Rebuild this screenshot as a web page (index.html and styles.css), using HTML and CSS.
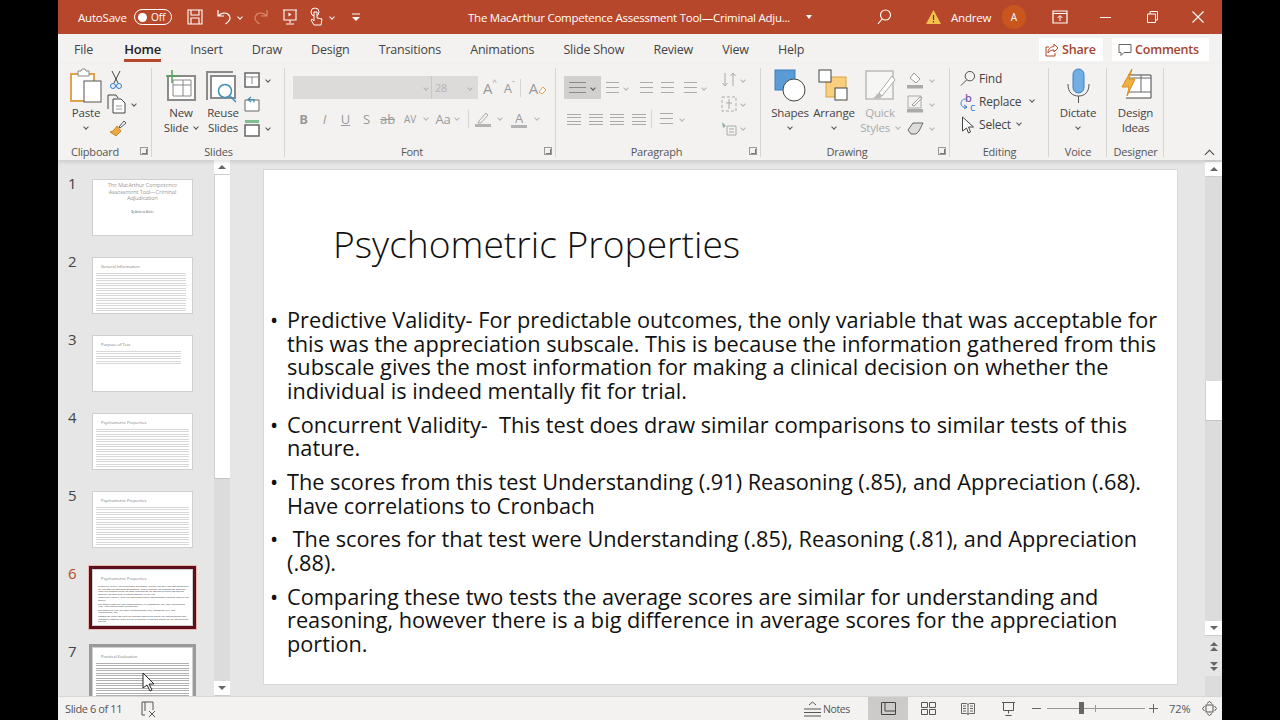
FILE: index.html
```html
<!DOCTYPE html>
<html lang="en">
<head>
  <meta charset="UTF-8" />
  <title>PowerPoint - Psychometric Properties</title>
  <link rel="stylesheet" href="styles.css">
</head>
<body>
<div class="window">

  <!-- title bar -->
  <header class="titlebar">
    <span class="autosave">AutoSave</span>
    <span class="toggle"><i></i>Off</span>
    <svg class="tb save" width="18" height="18" viewBox="0 0 18 18"><path d="M2 2h14v14H2zM5 2v5h8V2M5 16v-6h8v6" fill="none" stroke="#fff" stroke-width="1.1"/></svg>
    <svg class="tb undo" width="18" height="18" viewBox="0 0 18 18"><path d="M3 2v6h6M3.5 8c3-4 9-4 11 0 1.5 3-1 6-4 8" fill="none" stroke="#fff" stroke-width="1.2"/></svg>
    <i class="chev white c-undo"></i>
    <svg class="tb redo" width="18" height="18" viewBox="0 0 18 18"><path d="M15 2v6H9M14.5 8c-3-4-9-4-11 0-1.5 3 1 6 4 8" fill="none" stroke="#d98a70" stroke-width="1.2"/></svg>
    <svg class="tb pres" width="18" height="18" viewBox="0 0 18 18"><path d="M2 2h14M3 2v10h12V2M9 12v3M5 16h8" fill="none" stroke="#fff" stroke-width="1.1"/><path d="M7.5 4.5v4l3-2z" fill="#fff"/></svg>
    <svg class="tb touch" width="16" height="20" viewBox="0 0 16 20"><circle cx="7" cy="5" r="4" fill="none" stroke="#fff"/><path d="M6 5v9l-2-2-1 1 3 5h7l1-6-5-1V5z" fill="#b7472a" stroke="#fff"/></svg>
    <i class="chev white c-touch"></i>
    <svg class="tb more" width="10" height="10" viewBox="0 0 10 10"><path d="M1 2h8" stroke="#fff"/><path d="M1 5h8L5 9z" fill="#fff"/></svg>
    <span class="doc-title">The MacArthur Competence Assessment Tool—Criminal Adju...</span>
    <i class="caret"></i>
    <svg class="tb search" width="16" height="16" viewBox="0 0 16 16"><circle cx="9.5" cy="6" r="5" fill="none" stroke="#fff" stroke-width="1.1"/><path d="M6 10l-4 5" stroke="#fff" stroke-width="1.2"/></svg>
    <svg class="tb warn" width="15" height="14" viewBox="0 0 15 14"><path d="M7.5 0L15 14H0z" fill="#f4c04e"/><path d="M7.5 5v5M7.5 11v1.5" stroke="#5a3a10" stroke-width="1.2"/></svg>
    <span class="user">Andrew</span>
    <span class="avatar">A</span>
    <svg class="tb display" width="16" height="14" viewBox="0 0 16 14"><path d="M1 1h14v12H1zM1 3.5h14" fill="none" stroke="#fff" stroke-width="1.2"/><path d="M8 11V6M5.5 8L8 5.5 10.5 8" fill="none" stroke="#fff"/></svg>
    <svg class="tb min" width="11" height="3" viewBox="0 0 11 3"><path d="M0 1.5h11" stroke="#fff"/></svg>
    <svg class="tb restore" width="11" height="12" viewBox="0 0 11 12"><path d="M.5 3h8v8.5h-8zM3 3V.5h7.5V9H8.5" fill="none" stroke="#fff"/></svg>
    <svg class="tb close" width="12" height="12" viewBox="0 0 12 12"><path d="M.5.5l11 11M11.5.5l-11 11" stroke="#fff" stroke-width="1.1"/></svg>
  </header>

  <!-- tabs -->
  <nav class="tabs">
    <a>File</a>
    <a class="active">Home</a>
    <a>Insert</a>
    <a>Draw</a>
    <a>Design</a>
    <a>Transitions</a>
    <a>Animations</a>
    <a>Slide Show</a>
    <a>Review</a>
    <a>View</a>
    <a>Help</a>
    <div class="tab-actions">
      <button class="share">
        <svg width="14" height="14" viewBox="0 0 14 14"><path d="M9 1l4 4-4 4V7C6 7 4 8 3 10c0-4 2-6 6-6.5zM10 10v3H1V4h3" fill="none" stroke="#b7472a"/></svg>
        Share
      </button>
      <button class="comments">
        <svg width="14" height="14" viewBox="0 0 14 14"><path d="M1 1.5h12v8H6l-3 3v-3H1z" fill="none" stroke="#666"/></svg>
        Comments
      </button>
    </div>
  </nav>

  <!-- ribbon -->
  <section class="ribbon">

    <div class="group g-clipboard">
      <div class="body">
        <div class="big w-paste">
          <svg width="32" height="36" viewBox="0 0 32 36"><rect x="1" y="6" width="23" height="27" fill="#fff" stroke="#e0a24a" stroke-width="2"/><path d="M8 6V3h3l1-2h3l1 2h3v5H8z" fill="#fff" stroke="#888"/><rect x="14" y="13" width="17" height="21" fill="#fff" stroke="#555"/></svg>
          <span>Paste</span>
          <i class="chev"></i>
        </div>
        <div class="col">
          <div class="row">
            <svg class="ml" width="14" height="20" viewBox="0 0 14 20"><path d="M3 1l6 12M11 1L5 13" stroke="#444" fill="none"/><circle cx="4" cy="16" r="2.5" fill="none" stroke="#2b7cd3"/><circle cx="10" cy="16" r="2.5" fill="none" stroke="#2b7cd3"/></svg>
          </div>
          <div class="row">
            <svg width="19" height="20" viewBox="0 0 19 20"><path d="M1 15V1h8l2 3" fill="none" stroke="#444"/><path d="M6 5h8l4 4v10H6z" fill="#fff" stroke="#444"/><path d="M9 12h6M9 15h6" stroke="#999"/></svg>
            <i class="chev"></i>
          </div>
          <div class="row">
            <svg class="ml" width="18" height="18" viewBox="0 0 18 18"><path d="M10 8l5-6 2 2-6 5z" fill="#fff" stroke="#555"/><path d="M8 7l4 5-5 5-6-4 3-1z" fill="#eba843" stroke="#c98a2a"/></svg>
          </div>
        </div>
      </div>
      <div class="label">Clipboard<i class="launcher"></i></div>
    </div>

    <div class="group g-slides">
      <div class="body">
        <div class="big w-new">
          <svg width="32" height="36" viewBox="0 0 32 36"><rect x="3" y="8" width="27" height="24" fill="#fff" stroke="#8a8a8a" stroke-width="2"/><path d="M8 12h18v16H8zM18 12v16M8 17h18" fill="none" stroke="#888"/><path d="M7 2v13M1 8h13" stroke="#5aa05a" stroke-width="1.5"/></svg>
          <span>New</span>
          <span>Slide <i class="chev inline"></i></span>
        </div>
        <div class="big w-reuse">
          <svg width="36" height="36" viewBox="0 0 36 36"><path d="M2 32V4h26" fill="none" stroke="#8a8a8a" stroke-width="2"/><rect x="6" y="8" width="24" height="22" fill="#fff" stroke="#8a8a8a" stroke-width="2"/><circle cx="20" cy="23" r="6.5" fill="#fff" stroke="#3f8fb5" stroke-width="1.5"/><path d="M25 28l6 6" stroke="#3f8fb5" stroke-width="1.5"/></svg>
          <span>Reuse</span>
          <span>Slides</span>
        </div>
        <div class="col">
          <div class="row">
            <svg width="16" height="16" viewBox="0 0 16 16"><rect x="1" y="1" width="14" height="14" fill="#fff" stroke="#666" stroke-width="1.5"/><path d="M1 5h14M8 5v7" stroke="#888"/></svg>
            <i class="chev"></i>
          </div>
          <div class="row">
            <svg width="16" height="16" viewBox="0 0 16 16"><path d="M1 4h14v11H1z" fill="#fff" stroke="#666"/><path d="M7 1L4 3.5 7 6M4 3.5h6v3" fill="none" stroke="#3f8fb5" stroke-width="1.2"/></svg>
          </div>
          <div class="row">
            <svg width="16" height="18" viewBox="0 0 16 18"><rect x="1" y="1" width="14" height="3" fill="#7fbf8f"/><rect x="1" y="6" width="14" height="11" fill="#fff" stroke="#666" stroke-width="1.5"/></svg>
            <i class="chev"></i>
          </div>
        </div>
      </div>
      <div class="label">Slides</div>
    </div>

    <div class="group g-font">
      <div class="body stacked">
        <div class="tool-row r1">
          <div class="combo font-name"><i class="chev faded"></i></div>
          <div class="combo font-size"><span>28</span><i class="chev faded"></i></div>
          <span class="ft grow">A<sup>^</sup></span>
          <span class="ft shrink">A<sup>ˇ</sup></span>
          <i class="vsep"></i>
          <span class="ft clear">A<svg width="9" height="9" viewBox="0 0 9 9"><path d="M1 6l4-5 3 3-4 4z" fill="#fff" stroke="#e0a24a"/></svg></span>
        </div>
        <div class="tool-row r2">
          <b class="f">B</b>
          <i class="f">I</i>
          <u class="f">U</u>
          <span class="f">S</span>
          <s class="f">ab</s>
          <span class="f av">AV</span><i class="chev faded c-av"></i>
          <span class="f aa">Aa</span><i class="chev faded c-aa"></i>
          <i class="vsep"></i>
          <svg class="hl" width="16" height="18" viewBox="0 0 16 18"><path d="M4 11l7-8 2 2-7 8H3z" fill="none" stroke="#aaa"/><rect y="14" width="16" height="3" fill="#b3b3b3"/></svg><i class="chev faded c-hl"></i>
          <span class="col-a"><span>A</span></span><i class="chev faded c-col"></i>
        </div>
      </div>
      <div class="label">Font<i class="launcher"></i></div>
    </div>

    <div class="group g-para">
      <div class="body stacked">
        <div class="tool-row pr1">
          <div class="list-on"><i class="lines-ic"></i><i class="chev"></i></div>
          <i class="lines-ic"></i><i class="chev faded"></i>
          <i class="lines-ic ind1"></i>
          <i class="lines-ic ind2"></i>
          <i class="lines-ic sp"></i><i class="chev faded"></i>
        </div>
        <div class="tool-row pr2">
          <i class="align"></i>
          <i class="align"></i>
          <i class="align"></i>
          <i class="align"></i>
          <i class="vsep"></i>
          <i class="lines-ic"></i><i class="chev faded"></i>
        </div>
        <div class="para-side">
          <div class="row"><svg width="16" height="16" viewBox="0 0 16 16"><path d="M4 1v13M1.5 11L4 14l2.5-3M12 14V1M9.5 4L12 1l2.5 3" fill="none" stroke="#aaa"/></svg><i class="chev faded"></i></div>
          <div class="row"><svg width="16" height="16" viewBox="0 0 16 16"><path d="M1 1h14v14H1z" fill="none" stroke="#aaa" stroke-dasharray="3 2"/><path d="M8 3v10M5 7h6" stroke="#aaa"/></svg><i class="chev faded"></i></div>
          <div class="row"><svg width="16" height="16" viewBox="0 0 16 16"><path d="M6 6h9v9H6z" fill="none" stroke="#aaa"/><path d="M8 9h5M8 12h5" stroke="#aaa"/><path d="M1 2l4 4-3 2z" fill="#8fb0a8"/></svg><i class="chev faded"></i></div>
        </div>
      </div>
      <div class="label">Paragraph<i class="launcher"></i></div>
    </div>

    <div class="group g-drawing">
      <div class="body">
        <div class="big w-shapes">
          <svg width="32" height="36" viewBox="0 0 32 36"><rect x="1" y="2" width="20" height="20" fill="#5b9bd5" stroke="#3f7fc0"/><circle cx="20" cy="22" r="11" fill="#fff" stroke="#444"/></svg>
          <span>Shapes</span>
          <i class="chev"></i>
        </div>
        <div class="big w-arrange">
          <svg width="32" height="36" viewBox="0 0 32 36"><rect x="8" y="9" width="20" height="20" fill="#f7cf7f" stroke="#d9a13f"/><rect x="1" y="2" width="12" height="12" fill="#fff" stroke="#444"/><rect x="17" y="20" width="12" height="12" fill="#fff" stroke="#444"/></svg>
          <span>Arrange</span>
          <i class="chev"></i>
        </div>
        <div class="big w-quick faded-text">
          <svg width="32" height="36" viewBox="0 0 32 36"><rect x="2" y="3" width="27" height="28" fill="#f6f6f5" stroke="#bbb" stroke-width="1.5"/><path d="M28 8L15 25l3 3L31 12z" fill="#fff" stroke="#aaa"/><path d="M15 25c-3 1-3 4-6 5 4 1 8 1 9-2z" fill="#bbb"/></svg>
          <span>Quick</span>
          <span>Styles <i class="chev inline faded"></i></span>
        </div>
        <div class="col">
          <div class="row"><svg width="17" height="18" viewBox="0 0 17 18"><path d="M7 2l6 6-4 4-6-5z" fill="#fff" stroke="#999"/><rect y="14" width="16" height="3.5" fill="#aaa"/></svg><i class="chev faded"></i></div>
          <div class="row"><svg width="17" height="18" viewBox="0 0 17 18"><path d="M1 1h13v12H1z" fill="none" stroke="#aaa"/><path d="M5 10l8-8 2 1-8 8z" fill="#fff" stroke="#999"/><rect y="14" width="16" height="3.5" fill="#aaa"/></svg><i class="chev faded"></i></div>
          <div class="row"><svg width="17" height="14" viewBox="0 0 17 14"><path d="M1 9l5-7h10l-4 8-3 3H4z" fill="#ddd" stroke="#666"/></svg><i class="chev faded"></i></div>
        </div>
      </div>
      <div class="label">Drawing<i class="launcher"></i></div>
    </div>

    <div class="group g-editing">
      <div class="body">
        <div class="col edit-col">
          <div class="row">
            <svg class="ic" width="17" height="17" viewBox="0 0 17 17"><circle cx="10.5" cy="6" r="5" fill="none" stroke="#444"/><path d="M7 10l-6 6" stroke="#444"/></svg>
            <span>Find</span>
          </div>
          <div class="row">
            <span class="replace-ic"><b>b</b><em>c</em><svg width="8" height="11" viewBox="0 0 8 11"><path d="M7 1.5C3 0 1 3 1 5.5S3 10 7 9M4 7l3 2-3 2" fill="none" stroke="#2b7cd3"/></svg></span>
            <span>Replace</span><i class="chev far"></i>
          </div>
          <div class="row">
            <svg class="ic" width="15" height="18" viewBox="0 0 15 18"><path d="M2 1v14l4-3 2 5 2-1-2-5h5z" fill="#fff" stroke="#444"/></svg>
            <span>Select</span><i class="chev inline"></i>
          </div>
        </div>
      </div>
      <div class="label">Editing</div>
    </div>

    <div class="group g-voice">
      <div class="body">
        <div class="big w-full">
          <svg width="24" height="36" viewBox="0 0 24 36"><rect x="7" y="1" width="11" height="24" rx="5.5" fill="#71aee3" stroke="#3f7fc0"/><path d="M2 16c0 8 4 12 10.5 12S23 24 23 16M12.5 28v7" fill="none" stroke="#555"/></svg>
          <span>Dictate</span>
          <i class="chev"></i>
        </div>
      </div>
      <div class="label">Voice</div>
    </div>

    <div class="group g-designer">
      <div class="body">
        <div class="big w-full">
          <svg width="32" height="36" viewBox="0 0 32 36"><path d="M8 7h23v23H6" fill="#fff" stroke="#444"/><path d="M21 7v17M8 24h23M8 10h23" stroke="#666" fill="none"/><path d="M6 27l2-9H1L11 0 8 10h6z" fill="#f0b040" stroke="#d98f20" transform="translate(1 1)"/></svg>
          <span>Design</span>
          <span>Ideas</span>
        </div>
      </div>
      <div class="label">Designer</div>
    </div>

    <i class="collapse"></i>
  </section>

  <!-- workspace -->
  <main class="workspace">
    <aside class="thumbs">
      <div class="thumb-row">
        <span class="num">1</span>
        <div class="thumb title-slide">
          <p class="t-main">The MacArthur Competence Assessment Tool—Criminal Adjudication</p>
          <p class="t-by">By Andrew Butler</p>
        </div>
      </div>
      <div class="thumb-row">
        <span class="num">2</span>
        <div class="thumb"><p class="t-head">General Information:</p><i class="bars h-two"></i></div>
      </div>
      <div class="thumb-row">
        <span class="num">3</span>
        <div class="thumb"><p class="t-head">Purpose of Test</p><i class="bars h-one"></i></div>
      </div>
      <div class="thumb-row">
        <span class="num">4</span>
        <div class="thumb"><p class="t-head">Psychometric Properties</p><i class="bars h-three"></i></div>
      </div>
      <div class="thumb-row">
        <span class="num">5</span>
        <div class="thumb"><p class="t-head">Psychometric Properties</p><i class="bars h-three"></i></div>
      </div>
      <div class="thumb-row selected">
        <span class="num">6</span>
        <div class="thumb">
          <p class="t-head">Psychometric Properties</p>
          <ul class="t-list">
            <li>Predictive Validity- For predictable outcomes, the only variable that was acceptable for this was the appreciation subscale. This is because the information gathered from this subscale gives the most information for making a clinical decision on whether the individual is indeed mentally fit for trial.</li>
            <li>Concurrent Validity- This test does draw similar comparisons to similar tests of this nature.</li>
            <li>The scores from this test Understanding (.91) Reasoning (.85), and Appreciation (.68). Have correlations to Cronbach</li>
            <li>The scores for that test were Understanding (.85), Reasoning (.81), and Appreciation (.88).</li>
            <li>Comparing these two tests the average scores are similar for understanding and reasoning, however there is a big difference in average scores for the appreciation portion.</li>
          </ul>
        </div>
      </div>
      <div class="thumb-row hovered">
        <span class="num">7</span>
        <div class="thumb"><p class="t-head">Practical Evaluation</p><i class="bars h-four dark"></i></div>
      </div>
      <svg class="cursor" width="13" height="20" viewBox="0 0 13 20"><path d="M1 1v15l4-3 3 6 2-1-3-6h5z" fill="#fff" stroke="#222"/></svg>
    </aside>
    <div class="thumb-scroll">
      <div class="sb-btn"><i class="tri up"></i></div>
      <div class="sb-thumb"></div>
      <div class="sb-track"></div>
      <div class="sb-btn"><i class="tri down"></i></div>
    </div>

    <div class="stage">
      <article class="slide">
        <h1>Psychometric Properties</h1>
        <ul class="points">
          <li>Predictive Validity- For predictable outcomes, the only variable that was acceptable for this was the appreciation subscale. This is because the information gathered from this subscale gives the most information for making a clinical decision on whether the individual is indeed mentally fit for trial.</li>
          <li>Concurrent Validity-&nbsp; This test does draw similar comparisons to similar tests of this nature.</li>
          <li>The scores from this test Understanding (.91) Reasoning (.85), and Appreciation (.68). Have correlations to Cronbach</li>
          <li><span>&nbsp;The scores for that test were Understanding (.85), Reasoning (.81), and Appreciation (.88).</span></li>
          <li>Comparing these two tests the average scores are similar for understanding and reasoning, however there is a big difference in average scores for the appreciation portion.</li>
        </ul>
      </article>
    </div>

    <div class="main-scroll">
      <div class="sb-btn"><i class="tri up"></i></div>
      <div class="sb-gap"></div>
      <div class="sb-thumb"></div>
      <div class="sb-rest"></div>
      <div class="sb-btn"><i class="tri down"></i></div>
      <div class="sb-page"><i class="tri up"></i><i class="tri up"></i></div>
      <div class="sb-page"><i class="tri down"></i><i class="tri down"></i></div>
    </div>
  </main>

  <!-- status bar -->
  <footer class="statusbar">
    <span class="slide-count">Slide 6 of 11</span>
    <svg class="spell" width="16" height="16" viewBox="0 0 16 16"><path d="M4 14H1V1h11v8M4 1v9" fill="none" stroke="#555"/><path d="M8 10l6 6M14 10l-6 6" stroke="#555"/></svg>
    <span class="notes">
      <svg width="17" height="16" viewBox="0 0 17 16"><path d="M5 4l3.5-3L12 4M0 8h17M0 11.5h17M0 15h17" fill="none" stroke="#555"/></svg>
      Notes
    </span>
    <span class="view on"><svg width="15" height="13" viewBox="0 0 15 13"><path d="M.5.5h14v12H.5zM4 .5V9h10.5" fill="none" stroke="#444"/></svg></span>
    <span class="view"><svg width="15" height="13" viewBox="0 0 15 13"><path d="M.5.5h6v5h-6zM8.5.5h6v5h-6zM.5 7.5h6v5h-6zM8.5 7.5h6v5h-6z" fill="none" stroke="#555"/></svg></span>
    <span class="view"><svg width="14" height="13" viewBox="0 0 14 13"><path d="M.5 1.5h5L7 2.5l1.5-1h5v10h-5L7 12.5l-1.5-1h-5zM7 2.5v10M2 4h3M2 6.5h3M2 9h3M9 4h3M9 6.5h3M9 9h3" fill="none" stroke="#555" stroke-width=".9"/></svg></span>
    <span class="view"><svg width="13" height="14" viewBox="0 0 13 14"><path d="M0 .5h13M1.5.5v8h10v-8M6.5 8.5v3M3.5 13.5h6" fill="none" stroke="#555"/></svg></span>
    <span class="zoom-minus"></span>
    <div class="slider"><i class="tick"></i><i class="knob"></i></div>
    <span class="zoom-plus"></span>
    <span class="pct">72%</span>
    <svg class="fit" width="15" height="15" viewBox="0 0 15 15"><rect x="4" y="4" width="7" height="7" fill="none" stroke="#555"/><path d="M2.5 5L.5 7.5l2 2.5M12.5 5l2 2.5-2 2.5M5 2.5L7.5.5l2.5 2M5 12.5l2.5 2 2.5-2" fill="none" stroke="#555"/></svg>
  </footer>
</div>
</body>
</html>
```

FILE: styles.css
```css
* {
  box-sizing: border-box;
}
html, body {
  margin: 0;
  height: 100%;
  background: #000;
}
body {
  font-family: "Open Sans", "Liberation Sans", sans-serif;
  color: #444;
  overflow: hidden;
}
.window {
  width: 1164px;
  height: 720px;
  margin-left: 58px;
  display: flex;
  flex-direction: column;
  background: #f3f2f1;
}

/* title bar */
.titlebar {
  height: 34px;
  background: #b7472a;
  color: #fff;
  display: flex;
  align-items: center;
  font-size: 11.5px;
  padding-left: 20px;
  flex: none;
}
.tb {
  flex: none;
}
.autosave {
  width: 56px;
  letter-spacing: -0.2px;
}
.toggle {
  width: 38px;
  height: 16px;
  border: 1px solid #fff;
  border-radius: 8px;
  font-size: 10px;
  display: flex;
  align-items: center;
  gap: 4px;
  padding-left: 3px;
}
.toggle i {
  width: 9px;
  height: 9px;
  border-radius: 50%;
  background: #fff;
}
.save { margin-left: 14px; }
.undo { margin-left: 11px; }
.c-undo { margin-left: 5px; }
.redo { margin-left: 10px; }
.pres { margin-left: 11px; }
.touch { margin-left: 9px; }
.c-touch { margin-left: 6px; }
.more { margin-left: 17px; }
.doc-title {
  margin-left: 107px;
  width: 331px;
  white-space: nowrap;
  letter-spacing: -0.25px;
}
.caret {
  width: 0;
  height: 0;
  margin-left: 7px;
  border: 3.5px solid transparent;
  border-top: 4px solid #fff;
  border-bottom: 0;
}
.search { margin-left: 64px; }
.warn { margin-left: 34px; }
.user {
  margin-left: 10px;
  width: 41px;
  white-space: nowrap;
  letter-spacing: -0.2px;
}
.avatar {
  width: 24px;
  height: 24px;
  margin-left: 10px;
  border-radius: 50%;
  background: #c9561e;
  font-size: 10px;
  display: flex;
  align-items: center;
  justify-content: center;
}
.display { margin-left: 26px; }
.min { margin-left: 32px; }
.restore { margin-left: 36px; }
.close { margin-left: 34px; }

/* chevrons */
.chev {
  display: inline-block;
  flex: none;
  width: 4px;
  height: 4px;
  border-right: 1px solid #555;
  border-bottom: 1px solid #555;
  transform: rotate(45deg);
}
.chev.white {
  border-color: #fff;
}
.chev.faded {
  border-color: #b5b5b5;
}
.chev.inline {
  margin: 0 0 3px 3px;
}

/* tabs */
.tabs {
  height: 30px;
  flex: none;
  display: flex;
  align-items: center;
  gap: 29.2px;
  padding: 1px 0 0 16px;
  font-size: 12.5px;
  letter-spacing: -0.2px;
  color: #444;
}
.tabs a {
  position: relative;
  line-height: 29px;
}
.tabs a.active {
  margin-left: 2px;
  color: #222;
  font-weight: 600;
  font-size: 13px;
}
.tabs a.active::after {
  content: "";
  position: absolute;
  left: 0;
  right: 0;
  bottom: 2px;
  height: 3px;
  background: #b7472a;
}
.tab-actions {
  margin-left: auto;
  display: flex;
  gap: 9px;
  padding-right: 13px;
}
.tab-actions button {
  height: 23px;
  border: 0;
  background: #fff;
  font: 600 12.5px "Open Sans", sans-serif;
  letter-spacing: -0.2px;
  color: #a4452c;
  display: flex;
  align-items: center;
  gap: 3px;
  padding: 0 6px;
}
.share {
  width: 64px;
}
.comments {
  width: 97px;
}

/* ribbon */
.ribbon {
  height: 96px;
  flex: none;
  display: flex;
  position: relative;
  font-size: 11.5px;
  letter-spacing: -0.2px;
  color: #444;
  box-shadow: 0 2px 4px rgba(0, 0, 0, .12);
  z-index: 2;
}
.group {
  display: flex;
  flex-direction: column;
  flex: none;
  position: relative;
}
.group::after {
  content: "";
  position: absolute;
  right: 0;
  top: 4px;
  bottom: 3px;
  width: 1px;
  background: #d6d5d3;
}
.g-clipboard { width: 94px; }
.g-slides { width: 133px; }
.g-font { width: 271px; }
.g-para { width: 205px; }
.g-drawing { width: 189px; }
.g-editing { width: 99px; }
.g-voice { width: 58px; }
.g-designer { width: 57px; }
.body {
  height: 79px;
  padding-top: 4px;
  display: flex;
  flex: none;
}
.label {
  flex: 1;
  text-align: center;
  font-size: 11px;
  line-height: 17px;
  position: relative;
  color: #555;
}
.g-clipboard .label { padding-right: 20px; }
.g-font .label { padding-right: 17px; }
.g-para .label { padding-right: 4px; }
.g-drawing .label { padding-right: 17px; }
.launcher {
  position: absolute;
  right: 4px;
  top: 4px;
  width: 8px;
  height: 8px;
  border: 1px solid #999;
}
.launcher::after {
  content: "";
  position: absolute;
  right: 0;
  bottom: 0;
  width: 4px;
  height: 4px;
  border-right: 1px solid #777;
  border-bottom: 1px solid #777;
}
.big {
  display: flex;
  flex-direction: column;
  align-items: center;
  flex: none;
  line-height: 15px;
}
.big svg {
  height: 36px;
  margin-bottom: 1px;
}
.big .chev {
  margin-top: 5px;
}
.w-paste { width: 36px; margin-left: 10px; }
.w-new { width: 44px; margin-left: 7px; }
.w-reuse { width: 40px; }
.w-shapes { width: 44px; margin-left: 7px; }
.w-arrange { width: 46px; margin-left: -1px; }
.w-quick { width: 46px; }
.w-full { width: 100%; }
.faded-text {
  color: #aaa;
}
.col {
  display: flex;
  flex-direction: column;
  flex: none;
}
.row {
  height: 24px;
  display: flex;
  align-items: center;
  gap: 6px;
}
.g-clipboard .col { margin-left: 3px; }
.g-clipboard .ml { margin-left: 2px; }
.g-slides .col { margin-left: 1px; }
.g-drawing .col { margin-left: 4px; }
.stacked {
  display: block;
  position: relative;
}

/* font group */
.tool-row {
  display: flex;
  align-items: center;
}
.r1 {
  height: 23px;
  margin: 8px 0 0 8px;
}
.r2 {
  height: 22px;
  margin: 9px 0 0 8px;
  color: #9a9a9a;
  font-size: 13px;
}
.combo {
  height: 23px;
  background: #dcdbd9;
  display: flex;
  align-items: center;
  justify-content: flex-end;
  font-size: 11px;
  color: #b5b5b5;
}
.font-name {
  width: 139px;
  padding-right: 3px;
  border-right: 1px solid #c8c8c8;
}
.font-size {
  width: 46px;
  padding: 0 6px 0 3px;
  justify-content: space-between;
}
.ft {
  color: #9a9a9a;
  font-size: 15px;
  display: inline-flex;
  align-items: flex-start;
}
.ft sup {
  font-size: 8px;
  line-height: 8px;
}
.grow { margin-left: 5px; }
.shrink { margin-left: 7px; font-size: 13px; }
.clear { margin-left: 8px; }
.clear svg { margin-top: 8px; }
.vsep {
  flex: none;
  width: 1px;
  height: 18px;
  margin-left: 5px;
  background: #d6d5d3;
}
.f {
  width: 21px;
  text-align: center;
}
.av { width: 24px; font-size: 10px; }
.c-av { margin: 0 0 2px 2px; }
.aa { margin-left: 5px; width: 20px; }
.c-aa { margin: 0 0 2px 2px; }
.r2 .vsep { margin-left: 9px; }
.hl { margin-left: 6px; }
.c-hl { margin: 0 0 2px 7px; }
.col-a {
  width: 16px;
  margin-left: 9px;
  text-align: center;
  border-bottom: 3px solid #b3b3b3;
  line-height: 14px;
}
.c-col { margin: 0 0 2px 8px; }

/* paragraph group */
.pr1 {
  height: 23px;
  margin: 8px 0 0 8px;
  gap: 5px;
}
.pr2 {
  height: 22px;
  margin: 9px 0 0 11px;
  gap: 7.5px;
}
.list-on {
  width: 37px;
  height: 23px;
  background: #d2d0ce;
  display: flex;
  align-items: center;
  gap: 5px;
  padding-left: 5px;
}
.lines-ic {
  display: block;
  flex: none;
  width: 13px;
  height: 12px;
  background: repeating-linear-gradient(#aaa 0 1px, transparent 1px 5px);
}
.list-on .lines-ic {
  width: 17px;
  background: repeating-linear-gradient(#8a8a8a 0 1px, transparent 1px 5px);
}
.ind1 { margin-left: 7px; }
.ind2 { margin-left: 3px; }
.sp { margin-left: 5px; }
.align {
  display: block;
  flex: none;
  width: 14px;
  height: 11px;
  background: repeating-linear-gradient(#aaa 0 1px, transparent 1px 3.3px);
}
.pr2 .vsep {
  margin-left: -2px;
}
.para-side {
  position: absolute;
  left: 165px;
  top: 4px;
}
.para-side .row {
  gap: 4px;
}

/* editing */
.edit-col {
  margin: -1px 0 0 10px;
}
.edit-col .row {
  height: 23px;
  gap: 3px;
  font-size: 12px;
}
.edit-col .ic {
  width: 16px;
}
.replace-ic {
  position: relative;
  width: 16px;
  height: 18px;
  display: block;
}
.replace-ic b, .replace-ic em {
  position: absolute;
  display: block;
  line-height: 9px;
  font-size: 11px;
  font-style: normal;
}
.replace-ic b {
  left: 5px;
  top: 0;
  font-weight: 600;
  color: #8a5aa8;
}
.replace-ic em {
  left: 10px;
  top: 9px;
  color: #2b7cd3;
}
.replace-ic svg {
  position: absolute;
  left: 0;
  top: 5px;
}
.chev.far {
  margin: 0 0 3px 6px;
}

.collapse {
  position: absolute;
  left: 1148px;
  top: 87px;
  width: 7px;
  height: 7px;
  border-left: 1px solid #444;
  border-top: 1px solid #444;
  transform: rotate(45deg);
}

/* workspace */
.workspace {
  flex: 1;
  min-height: 0;
  display: flex;
  background: #e6e6e6;
}
.thumbs {
  width: 156px;
  flex: none;
  padding-top: 19px;
  overflow: hidden;
  position: relative;
}
.thumb-row {
  display: flex;
  height: 57px;
  margin-bottom: 21px;
  position: relative;
}
.num {
  width: 34px;
  padding-left: 10px;
  font-size: 15px;
  line-height: 8px;
  color: #444;
  flex: none;
}
.thumb {
  width: 101px;
  height: 57px;
  flex: none;
  background: #fff;
  border: 1px solid #cfcfcf;
  padding: 6px 3px 0;
  overflow: hidden;
}
.thumb.title-slide {
  padding-top: 2px;
}
.thumb p {
  margin: 0;
}
.t-main {
  font-size: 5.5px;
  line-height: 6.5px;
  font-weight: 300;
  text-align: center;
  padding: 0 8px;
  color: #555;
}
.thumb .t-by {
  font-size: 2.8px;
  text-align: center;
  margin-top: 8px;
  color: #666;
}
.t-head {
  font-size: 4px;
  line-height: 6px;
  padding-left: 5px;
  color: #777;
  white-space: nowrap;
}
.t-list {
  margin: 3px 0 0;
  padding: 0 0 0 2px;
  font-size: 2.37px;
  line-height: 2.6px;
  color: #333;
}
.t-list li {
  margin-bottom: 1px;
}
.bars {
  display: block;
  margin-top: 3px;
  background: repeating-linear-gradient(#d8d8d8 0 1px, #fff 1px 2.5px);
}
.bars.dark {
  background: repeating-linear-gradient(#b0b0b0 0 1px, #fff 1px 2.5px);
}
.h-one { height: 14px; margin-right: 8px; }
.h-two { height: 38px; margin-right: 3px; }
.h-three { height: 38px; }
.h-four { height: 50px; }
.selected .num {
  color: #b7472a;
}
.selected .thumb {
  outline: 3px solid #5e0f1b;
  box-shadow: 0 0 0 4px #e8b8ac;
}
.hovered .thumb {
  outline: 3px solid #9a9a9a;
}
.cursor {
  position: absolute;
  left: 84px;
  top: 512px;
}
.thumb-scroll, .main-scroll {
  width: 17px;
  flex: none;
  display: flex;
  flex-direction: column;
  background: #dcdcdc;
}
.thumb-scroll {
  width: 16px;
}
.sb-btn {
  height: 15px;
  flex: none;
  background: #fff;
  display: flex;
  align-items: center;
  justify-content: center;
  border-bottom: 1px solid #ccc;
}
.sb-thumb {
  background: #fff;
  border-bottom: 1px solid #c4c4c4;
  border-left: 1px solid #d0d0d0;
  flex: none;
}
.thumb-scroll .sb-thumb {
  height: 304px;
}
.sb-track {
  flex: 1;
}
.tri {
  display: block;
  width: 0;
  height: 0;
  border: 4px solid transparent;
}
.tri.up {
  border-top: 0;
  border-bottom: 4px solid #666;
}
.tri.down {
  border-bottom: 0;
  border-top: 4px solid #666;
}

/* slide */
.stage {
  flex: 1;
  min-width: 0;
  padding: 9px 27px 12px 33px;
}
.slide {
  width: 915px;
  height: 516px;
  background: #fff;
  border: 1px solid #d8d8d8;
  color: #111;
  overflow: hidden;
}
.slide h1 {
  margin: 0;
  padding: 50px 0 0 69px;
  font-weight: 300;
  font-size: 37.2px;
  line-height: 48px;
}
.points {
  margin: 40px 0 0;
  padding: 0 7px 0 6px;
  list-style: none;
  font-size: 21.72px;
  line-height: 23.67px;
}
.points li {
  display: flex;
  margin-bottom: 10px;
}
.points li::before {
  content: "•";
  flex: none;
  width: 17px;
}
.main-scroll {
  padding: 2px 0 20px;
}
.main-scroll .sb-gap {
  height: 204px;
  flex: none;
}
.main-scroll .sb-thumb {
  height: 40px;
}
.sb-rest {
  flex: 1;
}
.sb-page {
  height: 20px;
  flex: none;
  display: flex;
  flex-direction: column;
  align-items: center;
  justify-content: center;
  gap: 1px;
  background: #e6e6e6;
}

/* status bar */
.statusbar {
  height: 24px;
  flex: none;
  border-top: 1px solid #d6d6d6;
  display: flex;
  align-items: center;
  font-size: 11px;
  color: #555;
  position: relative;
}
.slide-count {
  margin-left: 7px;
  width: 76px;
  letter-spacing: -0.4px;
}
.notes {
  margin-left: 647px;
  width: 64px;
  display: flex;
  align-items: center;
  gap: 2px;
  font-size: 10.5px;
  letter-spacing: -0.4px;
}
.view {
  width: 40px;
  height: 23px;
  display: flex;
  align-items: center;
  justify-content: center;
}
.view.on {
  background: #cdcbc9;
}
.zoom-minus, .zoom-plus {
  position: relative;
  width: 9px;
  height: 1px;
  background: #666;
  flex: none;
}
.zoom-minus {
  margin-left: 4px;
}
.zoom-plus::after {
  content: "";
  position: absolute;
  left: 4px;
  top: -4px;
  width: 1px;
  height: 9px;
  background: #666;
}
.slider {
  width: 98px;
  height: 1px;
  margin: 0 4px 0 6px;
  background: #999;
  position: relative;
  flex: none;
}
.knob {
  position: absolute;
  left: 32px;
  top: -6px;
  width: 5px;
  height: 12px;
  background: #666;
}
.tick {
  position: absolute;
  left: 48px;
  top: -3px;
  width: 1px;
  height: 7px;
  background: #999;
}
.pct {
  margin-left: 11px;
  width: 28px;
}
.fit {
  margin-left: 5px;
}
```
